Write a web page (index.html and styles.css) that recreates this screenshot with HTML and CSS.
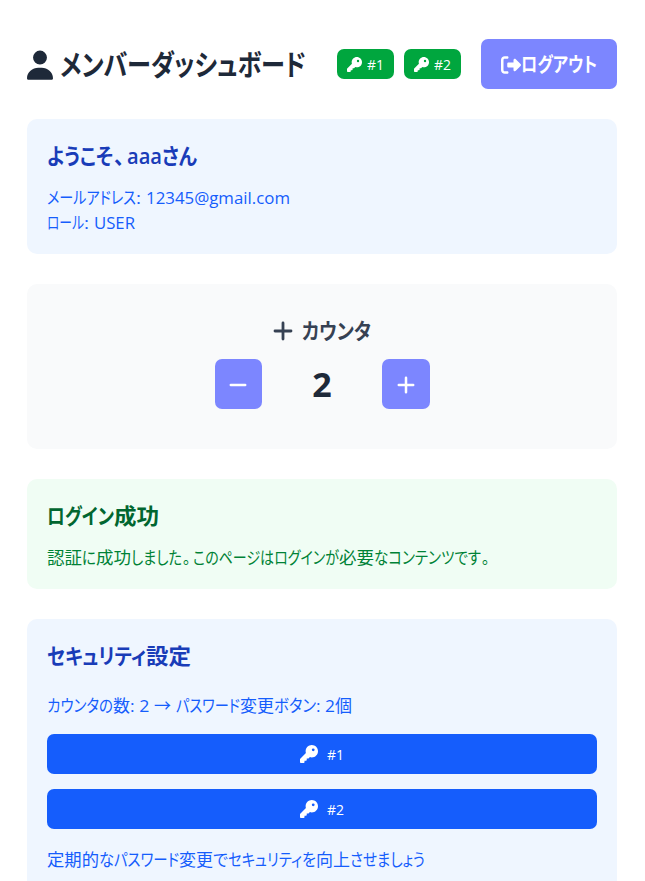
FILE: index.html
```html
<!DOCTYPE html>
<html lang="ja">
<head>
<meta charset="utf-8">
<title>メンバーダッシュボード</title>
<link rel="stylesheet" href="styles.css">
</head>
<body>
<svg class="sprite" aria-hidden="true">
  <symbol id="user" viewBox="0 0 448 512"><path d="M224 248a120 120 0 1 0 0-240 120 120 0 1 0 0 240zm-29.700 56C95.800 304 0 383.800 0 482.300C0 498.700 13.300 512 29.700 512H418.300c16.400 0 29.700-13.300 29.700-29.700C448 383.800 352.200 304 253.700 304H194.300z"/></symbol>
  <symbol id="key" viewBox="0 0 512 512"><path d="M336 352c97.200 0 176-78.800 176-176S433.200 0 336 0S160 78.800 160 176c0 18.700 2.900 36.800 8.300 53.700L7 391c-4.500 4.500-7 10.600-7 17v80c0 13.300 10.700 24 24 24h80c13.300 0 24-10.700 24-24V448h40c13.300 0 24-10.700 24-24V384h40c6.400 0 12.500-2.500 17-7l33.300-33.300c16.900 5.400 35 8.300 53.700 8.300zM376 96a40 40 0 1 1 0 80 40 40 0 1 1 0-80z"/></symbol>
  <symbol id="logout" viewBox="0 0 512 512"><path d="M377.900 105.900L500.700 228.700c7.200 7.200 11.300 17.100 11.300 27.300s-4.100 20.100-11.300 27.300L377.900 406.100c-6.400 6.400-15 9.900-24 9.900c-18.700 0-33.900-15.200-33.900-33.900l0-62.100-128 0c-17.700 0-32-14.300-32-32l0-64c0-17.700 14.300-32 32-32l128 0 0-62.100c0-18.700 15.200-33.900 33.900-33.900c9 0 17.600 3.600 24 9.900zM160 96L96 96c-17.700 0-32 14.300-32 32l0 256c0 17.700 14.300 32 32 32l64 0c17.700 0 32 14.300 32 32s-14.300 32-32 32l-64 0c-53 0-96-43-96-96L0 128C0 75 43 32 96 32l64 0c17.700 0 32 14.300 32 32s-14.300 32-32 32z"/></symbol>
  <symbol id="plus" viewBox="0 0 20 20"><path class="line" d="M10 2v16M2 10h16"/></symbol>
  <symbol id="minus" viewBox="0 0 20 20"><path class="line" d="M2 10h16"/></symbol>
</svg>
<main class="page">
  <header class="header">
    <h1 class="title"><svg class="icon-user"><use href="#user"/></svg><span data-width="246">メンバーダッシュボード</span></h1>
    <div class="badges">
      <span class="badge"><svg class="icon-badge"><use href="#key"/></svg><span data-width="17">#1</span></span>
      <span class="badge"><svg class="icon-badge"><use href="#key"/></svg><span data-width="17">#2</span></span>
    </div>
    <button class="logout"><svg class="icon-logout"><use href="#logout"/></svg><span data-width="76">ログアウト</span></button>
  </header>

  <section class="card blue">
    <h2><span data-width="66">ようこそ</span><span data-width="14"><span class="mark">、</span></span><span data-width="35">aaa</span><span data-width="35">さん</span></h2>
    <p><span data-width="89">メールアドレス</span><span data-width="10">: </span><span data-width="144">12345@gmail.com</span></p>
    <p><span data-width="37">ロール</span><span data-width="10">: </span><span data-width="41">USER</span></p>
  </section>

  <section class="card counter">
    <h2><svg class="icon-heading"><use href="#plus"/></svg><span data-width="69">カウンタ</span></h2>
    <div class="controls">
      <button class="step minus"><svg class="icon-step"><use href="#minus"/></svg></button>
      <span class="count">2</span>
      <button class="step plus"><svg class="icon-step"><use href="#plus"/></svg></button>
    </div>
  </section>

  <section class="card green">
    <h2><span data-width="67">ログイン</span><span data-width="45">成功</span></h2>
    <p><span data-width="35">認証</span><span data-width="14">に</span><span data-width="35">成功</span><span data-width="51">しました</span><span data-width="11"><span class="mark">。</span></span><span data-width="146">このページはログインが</span><span data-width="35">必要</span><span data-width="107">なコンテンツです</span><span data-width="11"><span class="mark">。</span></span></p>
  </section>

  <section class="card blue security">
    <h2><span data-width="99">セキュリティ</span><span data-width="45">設定</span></h2>
    <p class="summary"><span data-width="66">カウンタの</span><span data-width="17">数</span><span data-width="24">: 2 </span><span class="arrow" data-width="17">→</span><span data-width="5"> </span><span data-width="64">パスワード</span><span data-width="34">変更</span><span data-width="42">ボタン</span><span data-width="19">: 2</span><span data-width="17">個</span></p>
    <button class="change"><svg class="icon-change"><use href="#key"/></svg><span data-width="17">#1</span></button>
    <button class="change"><svg class="icon-change"><use href="#key"/></svg><span data-width="17">#2</span></button>
    <p class="advice"><span data-width="52">定期的</span><span data-width="15">な</span><span data-width="65">パスワード</span><span data-width="34">変更</span><span data-width="15">で</span><span data-width="74">セキュリティ</span><span data-width="14">を</span><span data-width="34">向上</span><span data-width="75">させましょう</span></p>
  </section>
</main>
<script src="fit.js"></script>
</body>
</html>
```
FILE: styles.css
```css
* { box-sizing: border-box; margin: 0; padding: 0; }
body {
  background: #fff;
  color: #1e2939;
  font: 17px/25px "Open Sans", "Noto Sans CJK JP", sans-serif;
  font-feature-settings: "palt";
}
.sprite { display: none; }
svg { display: block; flex: none; fill: currentColor; }
.line { fill: none; stroke: currentColor; stroke-width: 2.8; stroke-linecap: round; }
button { border: 0; color: #fff; font: inherit; font-feature-settings: inherit; }
[data-width] { display: inline-block; white-space: pre; transform-origin: left center; }
.mark { display: inline-block; padding: 0 3px 0 1px; }

.page { display: flex; flex-direction: column; gap: 30px; height: 881px; overflow: hidden; padding: 39px 28px 0 27px; }
.header { display: flex; flex: none; align-items: center; height: 50px; }
.title { display: flex; align-items: center; gap: 7px; margin-right: auto; padding-top: 2px; font-size: 29px; line-height: 50px; font-weight: 600; }
.icon-user { width: 26px; height: 30px; }
.badges { display: flex; gap: 10px; margin-right: 20px; }
.badge { display: flex; align-items: center; justify-content: center; gap: 5px; width: 57px; height: 30px; border-radius: 7px; background: #00a63e; color: #fff; font-size: 15px; line-height: 30px; }
.icon-badge { width: 15px; height: 15px; }
.logout { display: flex; align-items: center; padding: 2px 0 0 20px; width: 136px; height: 50px; border-radius: 7px; background: #7c86ff; font-size: 20px; font-weight: 600; line-height: 48px; }
.icon-logout { width: 20px; height: 20px; }

.card { flex: none; padding: 20px; border-radius: 10px; }
.card h2 { margin-bottom: 13px; font-size: 21.5px; line-height: 33px; height: 33px; font-weight: 600; white-space: nowrap; }
.card p { height: 25px; white-space: nowrap; }
.blue { height: 135px; background: #eff6ff; color: #155dfc; }
.blue h2 { color: #193cb8; }
.green { height: 110px; background: #f0fdf4; color: #008236; }
.green h2 { color: #016630; }

.counter { padding: 30px 20px 40px; height: 165px; background: #f9fafb; }
.counter h2 { display: flex; align-items: center; justify-content: center; gap: 9px; margin-bottom: 12px; color: #364153; }
.icon-heading { width: 20px; height: 20px; }
.controls { display: flex; justify-content: center; }
.step { display: flex; align-items: center; justify-content: center; height: 50px; border-radius: 7px; background: #7c86ff; padding-top: 2px; }
.minus { width: 47px; }
.plus { width: 48px; }
.icon-step { width: 18px; height: 18px; }
.count { width: 120px; padding-left: 1px; text-align: center; font-size: 34px; font-weight: 700; line-height: 50px; }

.security { flex: 1; min-height: 0; height: auto; overflow: hidden; border-radius: 10px 10px 0 0; padding-bottom: 0; }
.security h2 { margin-bottom: 20px; }
.security .summary { margin-bottom: 17px; }
.arrow { font-family: "Noto Sans CJK JP", sans-serif; }
.change { display: flex; align-items: center; justify-content: center; gap: 9px; width: 100%; height: 40px; margin-bottom: 15px; padding-right: 1px; border-radius: 7px; background: #155dfc; font-size: 15px; line-height: 38px; }
.icon-change { width: 18px; height: 18px; }
.advice { margin-top: 18px; }
```
FILE: fit.js
```js
// Condense each text run to its column width.
document.querySelectorAll('[data-width]').forEach(function (run) {
  var target = Number(run.dataset.width);
  var natural = run.getBoundingClientRect().width;
  run.style.transform = 'scaleX(' + target / natural + ')';
  run.style.marginRight = target - natural + 'px';
});
```
